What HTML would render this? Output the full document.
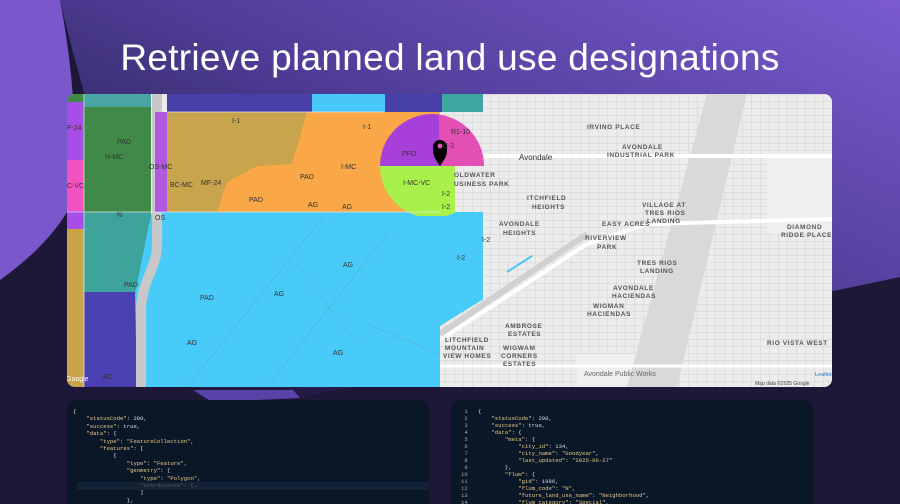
<!DOCTYPE html>
<html style="width:900px;height:504px;overflow:hidden"><head><meta charset="utf-8"><style>
html,body{margin:0;padding:0}
body{width:900px;height:504px;overflow:hidden;position:relative;background:#1d1838;font-family:"Liberation Sans",sans-serif}
.bg{position:absolute;left:0;top:0}
h1{position:absolute;left:0;width:900px;top:37px;margin:0;text-align:center;color:#fff;font-weight:400;font-size:37px;letter-spacing:0.3px}
.map{position:absolute;left:67px;top:94px;width:765px;height:293px;border-radius:8px;overflow:hidden;background:#ececec}
.lbl{position:absolute;font-size:7px;color:#333;white-space:nowrap}
.glbl{position:absolute;font-size:6.5px;color:#555;letter-spacing:0.6px;white-space:nowrap;font-weight:bold}
.code{position:absolute;top:400px;height:104px;background:#0a1727;border-radius:9px 9px 0 0;overflow:hidden;font-family:"Liberation Mono",monospace;font-size:5.6px;color:#d8dde6;line-height:7.4px}
.code pre{margin:0;font:inherit;white-space:pre}
.s{color:#e8c98a}
</style></head><body>
<svg class="bg" width="900" height="504">
<defs>
<linearGradient id="g" x1="0" y1="1" x2="1" y2="0">
<stop offset="0.15" stop-color="#221c44"/>
<stop offset="0.55" stop-color="#4e3c95"/>
<stop offset="1" stop-color="#7b5bd0"/>
</linearGradient>
</defs>
<path d="M60,0 L900,0 L900,277 C700,320 420,370 300,398 L205,398 C150,300 95,150 60,0 Z" fill="url(#g)"/>
<path d="M193,390 L293,390 L300,398 L212,402 Z" fill="#5a43a8"/>
<path d="M0,0 L60,0 C75,80 80,160 67,212 C50,240 25,262 0,280 Z" fill="#7a58cc"/>
</svg>
<h1>Retrieve planned land use designations</h1>

<div class="map">
<svg width="765" height="293" style="position:absolute;left:0;top:0">
<defs>
<pattern id="grid" width="9" height="7" patternUnits="userSpaceOnUse">
<rect width="9" height="7" fill="#ececec"/>
<path d="M0,0 H9 M0,0 V7" stroke="#c9c9c9" stroke-width="0.8"/>
</pattern>
<clipPath id="cu"><rect x="300" y="0" width="120" height="72"/></clipPath>
<clipPath id="cl"><rect x="300" y="72" width="88" height="46"/></clipPath>
<clipPath id="cc"><circle cx="365" cy="72" r="52"/></clipPath>
</defs>
<rect x="373" y="0" width="392" height="293" fill="url(#grid)"/>
<rect x="700" y="60" width="65" height="80" fill="#efefef"/>
<rect x="510" y="260" width="100" height="33" fill="#efefef"/>
<path d="M640,0 L680,0 L610,293 L560,293 Z" fill="#d9d9d9"/>
<path d="M373,62 H765" stroke="#fff" stroke-width="4"/>
<path d="M373,246 L520,150 L580,130 L765,125" stroke="#fff" stroke-width="4" fill="none"/>
<path d="M373,240 L520,140" stroke="#d0d0d0" stroke-width="6"/>
<path d="M440,178 L465,162" stroke="#48c8f8" stroke-width="2"/>
<path d="M373,272 H765" stroke="#fff" stroke-width="3"/>
<rect x="0" y="0" width="17" height="293" fill="#c8a448"/>
<rect x="0" y="0" width="17" height="8" fill="#3f8a46"/>
<rect x="0" y="8" width="17" height="58" fill="#a64ee6"/>
<rect x="0" y="66" width="17" height="51" fill="#f452c2"/>
<rect x="0" y="117" width="17" height="18" fill="#a64ee6"/>
<rect x="17" y="0" width="67" height="13" fill="#4aa6a2"/>
<rect x="17" y="13" width="67" height="105" fill="#3f8a48"/>
<rect x="17" y="118" width="67" height="80" fill="#3ea39b"/>
<rect x="17" y="198" width="67" height="95" fill="#4b40b2"/>
<rect x="100" y="0" width="145" height="18" fill="#4840a8"/>
<rect x="100" y="18" width="145" height="100" fill="#c8a44c"/>
<rect x="245" y="0" width="73" height="18" fill="#48c8f8"/>
<rect x="318" y="0" width="57" height="18" fill="#4840a8"/>
<rect x="375" y="0" width="41" height="18" fill="#3ea6a0"/>
<path d="M240,18 L318,18 L318,118 L150,118 L160,88 L190,72 L225,70 Z" fill="#f9a747"/>
<path d="M85,118 L373,118 L373,150 L415,150 L415,206 L373,232 L373,293 L70,293 L68,200 L80,140 Z" fill="#48cbf8"/>
<rect x="373" y="118" width="43" height="88" fill="#48cbf8"/>
<rect x="318" y="18" width="55" height="100" fill="#f9a747"/>
<g clip-path="url(#cc)">
<rect x="300" y="0" width="72" height="72" fill="#a640d8"/>
<rect x="372" y="0" width="60" height="72" fill="#e44fb6"/>
<rect x="300" y="72" width="88" height="50" fill="#a8f04a"/>
</g>
<rect x="372" y="72" width="16" height="46" fill="#a8f04a"/>
<path d="M90,0 L90,150 C90,175 75,185 74,215 L74,293" stroke="#c8c8c8" stroke-width="10" fill="none"/>
<rect x="88" y="18" width="12" height="100" fill="#b058e0"/>
<path d="M0,118 H373 M100,18 H318 M17,0 V293" stroke="#e8e8e8" stroke-width="1" opacity="0.7" fill="none"/>
<path d="M120,293 L260,118 M200,293 L320,140 M300,230 L373,260 M230,170 L290,250" stroke="#6a9ab0" stroke-width="0.6" opacity="0.6" fill="none"/>
<path d="M373,72 C366,62 366,60 366,53 A7,7 0 0 1 380,53 C380,60 380,62 373,72 Z" fill="#000"/>
<circle cx="373" cy="52" r="2.5" fill="#e44fb6"/>
</svg>
<div class="lbl" style="left:165px;top:24px">I-1</div>
<div class="lbl" style="left:50px;top:45px">PAD</div>
<div class="lbl" style="left:38px;top:60px">N-MC</div>
<div class="lbl" style="left:82px;top:70px">OS-MC</div>
<div class="lbl" style="left:103px;top:88px">BC-MC</div>
<div class="lbl" style="left:134px;top:86px">MF-24</div>
<div class="lbl" style="left:182px;top:103px">PAD</div>
<div class="lbl" style="left:233px;top:80px">PAD</div>
<div class="lbl" style="left:241px;top:108px">AG</div>
<div class="lbl" style="left:275px;top:110px">AG</div>
<div class="lbl" style="left:274px;top:70px">I-MC</div>
<div class="lbl" style="left:296px;top:30px">I-1</div>
<div class="lbl" style="left:336px;top:86px">I-MC-VC</div>
<div class="lbl" style="left:335px;top:57px">PFD</div>
<div class="lbl" style="left:376px;top:49px">C-2</div>
<div class="lbl" style="left:384px;top:35px">R1-10</div>
<div class="lbl" style="left:375px;top:97px">I-2</div>
<div class="lbl" style="left:375px;top:110px">I-2</div>
<div class="lbl" style="left:0px;top:31px">F-24</div>
<div class="lbl" style="left:0px;top:89px">C-VC</div>
<div class="lbl" style="left:50px;top:118px">N</div>
<div class="lbl" style="left:88px;top:121px">OS</div>
<div class="lbl" style="left:133px;top:201px">PAD</div>
<div class="lbl" style="left:207px;top:197px">AG</div>
<div class="lbl" style="left:276px;top:168px">AG</div>
<div class="lbl" style="left:120px;top:246px">AG</div>
<div class="lbl" style="left:266px;top:256px">AG</div>
<div class="lbl" style="left:390px;top:161px">I-2</div>
<div class="lbl" style="left:415px;top:143px">I-2</div>
<div class="lbl" style="left:57px;top:188px">PAD</div>
<div class="lbl" style="left:36px;top:280px">BC</div>
<div class="lbl" style="left:-1px;top:282px;color:#fff">Google</div>
<div class="glbl" style="left:520px;top:30px">IRVING PLACE</div>
<div class="glbl" style="left:555px;top:50px">AVONDALE</div>
<div class="glbl" style="left:540px;top:58px">INDUSTRIAL PARK</div>
<div class="lbl" style="left:452px;top:59px;font-size:8px">Avondale</div>
<div class="glbl" style="left:387px;top:78px">OLDWATER</div>
<div class="glbl" style="left:387px;top:87px">USINESS PARK</div>
<div class="glbl" style="left:460px;top:101px">ITCHFIELD</div>
<div class="glbl" style="left:465px;top:110px">HEIGHTS</div>
<div class="glbl" style="left:432px;top:127px">AVONDALE</div>
<div class="glbl" style="left:436px;top:136px">HEIGHTS</div>
<div class="glbl" style="left:535px;top:127px">EASY ACRES</div>
<div class="glbl" style="left:575px;top:108px">VILLAGE AT</div>
<div class="glbl" style="left:578px;top:116px">TRES RIOS</div>
<div class="glbl" style="left:580px;top:124px">LANDING</div>
<div class="glbl" style="left:518px;top:141px">RIVERVIEW</div>
<div class="glbl" style="left:530px;top:150px">PARK</div>
<div class="glbl" style="left:570px;top:166px">TRES RIOS</div>
<div class="glbl" style="left:573px;top:174px">LANDING</div>
<div class="glbl" style="left:546px;top:191px">AVONDALE</div>
<div class="glbl" style="left:545px;top:199px">HACIENDAS</div>
<div class="glbl" style="left:526px;top:209px">WIGMAN</div>
<div class="glbl" style="left:520px;top:217px">HACIENDAS</div>
<div class="glbl" style="left:438px;top:229px">AMBROSE</div>
<div class="glbl" style="left:441px;top:237px">ESTATES</div>
<div class="glbl" style="left:378px;top:243px">LITCHFIELD</div>
<div class="glbl" style="left:378px;top:251px">MOUNTAIN</div>
<div class="glbl" style="left:376px;top:259px">VIEW HOMES</div>
<div class="glbl" style="left:436px;top:251px">WIGWAM</div>
<div class="glbl" style="left:434px;top:259px">CORNERS</div>
<div class="glbl" style="left:436px;top:267px">ESTATES</div>
<div class="glbl" style="left:720px;top:130px">DIAMOND</div>
<div class="glbl" style="left:714px;top:138px">RIDGE PLACE</div>
<div class="glbl" style="left:700px;top:246px">RIO VISTA WEST</div>
<div class="lbl" style="left:517px;top:277px;color:#666">Avondale Public Works</div>
<div class="lbl" style="left:688px;top:287px;font-size:5px;color:#444">Map data ©2025 Google</div>
<div class="lbl" style="left:748px;top:278px;font-size:5.5px;color:#2a7ac0">Leaflet</div>
</div>

<div class="code" style="left:67px;width:362px"><pre style="padding:8px 0 0 6px">{
    <span class="s">"statusCode"</span>: 200,
    <span class="s">"success"</span>: true,
    <span class="s">"data"</span>: {
        <span class="s">"type"</span>: <span class="s">"FeatureCollection"</span>,
        <span class="s">"features"</span>: [
            {
                <span class="s">"type"</span>: <span class="s">"Feature"</span>,
                <span class="s">"geometry"</span>: {
                    <span class="s">"type"</span>: <span class="s">"Polygon"</span>,
                    <span class="s">"coordinates"</span>: [↔
                    ]
                },</pre>
<div style="position:absolute;left:10px;top:82px;width:352px;height:8px;background:#17283a;opacity:0.7"></div></div>
<div class="code" style="left:451px;width:362px;line-height:7px"><pre style="padding:8px 0 0 10px;color:#9aa"> 1
 2
 3
 4
 5
 6
 7
 8
 9
10
11
12
13
14
15</pre><pre style="position:absolute;left:27px;top:8px">{
    <span class="s">"statusCode"</span>: 200,
    <span class="s">"success"</span>: true,
    <span class="s">"data"</span>: {
        <span class="s">"meta"</span>: {
            <span class="s">"city_id"</span>: 134,
            <span class="s">"city_name"</span>: <span class="s">"Goodyear"</span>,
            <span class="s">"last_updated"</span>: <span class="s">"2025-06-27"</span>
        },
        <span class="s">"flum"</span>: {
            <span class="s">"gid"</span>: 1986,
            <span class="s">"flum_code"</span>: <span class="s">"N"</span>,
            <span class="s">"future_land_use_name"</span>: <span class="s">"Neighborhood"</span>,
            <span class="s">"flum_category"</span>: <span class="s">"Special"</span>,
            <span class="s">"future_land_use_desc"</span>: null,</pre></div>
</body></html>
